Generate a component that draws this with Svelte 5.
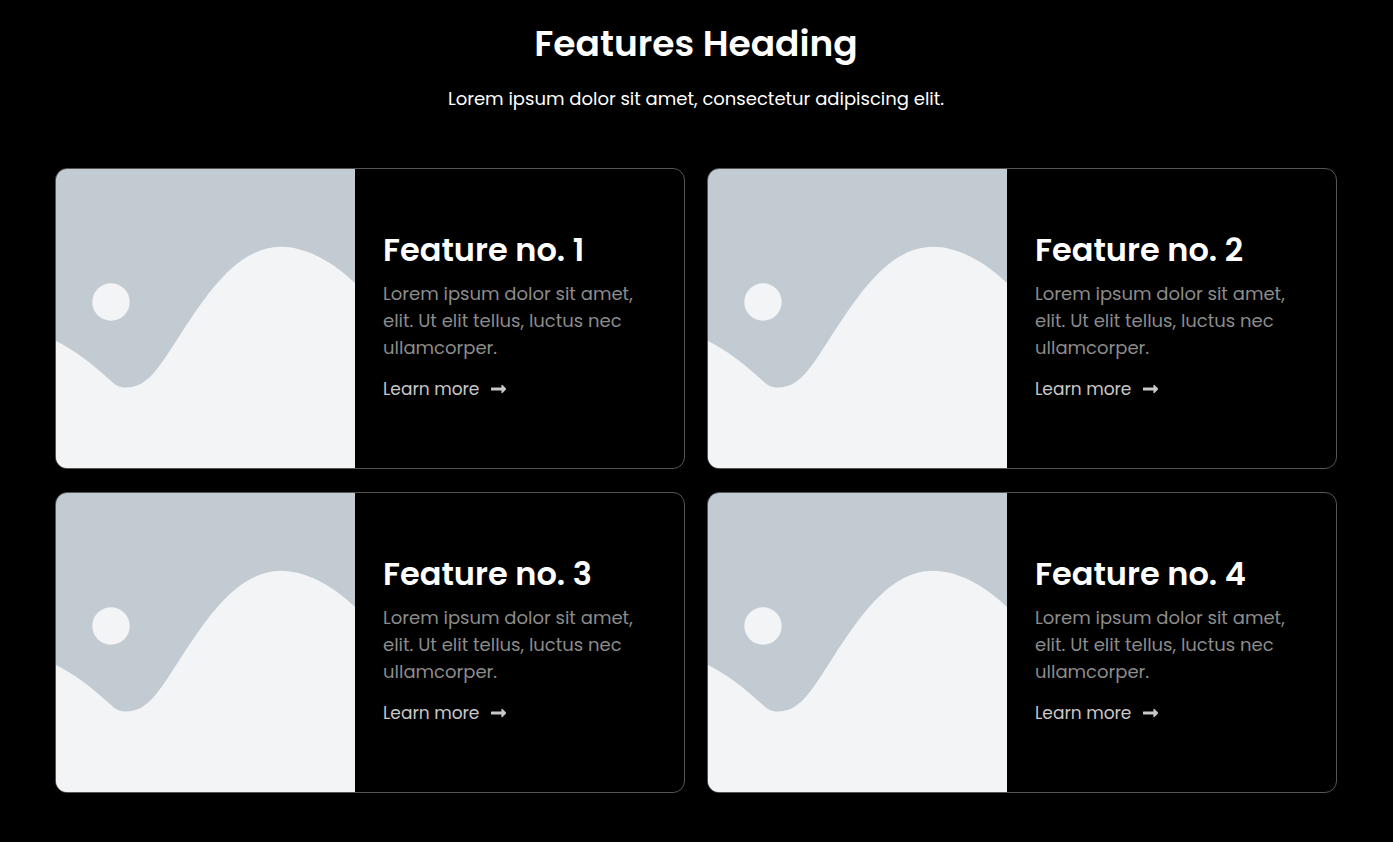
<script>
    const text = 'Lorem ipsum dolor sit amet, elit. Ut elit tellus, luctus nec ullamcorper.';

    let features = [
        { id: 1, title: 'Feature no. 1', text },
        { id: 2, title: 'Feature no. 2', text },
        { id: 3, title: 'Feature no. 3', text },
        { id: 4, title: 'Feature no. 4', text }
    ];
</script>

<section class="features">
    <header>
        <h1>Features Heading</h1>
        <p>Lorem ipsum dolor sit amet, consectetur adipiscing elit.</p>
    </header>

    <div class="grid">
        {#each features as feature (feature.id)}
            <article class="card">
                <svg class="image" viewBox="0 0 299 299" preserveAspectRatio="xMidYMid slice" aria-hidden="true">
                    <rect width="299" height="299" fill="#c3cbd2" />
                    <circle cx="55" cy="133" r="18.7" fill="#f2f4f6" />
                    <path
                        fill="#f2f4f6"
                        d="M0 172C18 181 34 193 55 212C60 217 65 218.5 70 218.5C82 218.5 91 212.5 101 200C109 190 118 175 127.5 160.5C149 129 180 77.8 225 77.8C249 77.8 276 92 299 114V299H0Z"
                    />
                </svg>
                <div class="content">
                    <h2>{feature.title}</h2>
                    <p>{feature.text}</p>
                    <a href="#feature-{feature.id}">
                        Learn more
                        <svg class="arrow" viewBox="0 0 16 10" aria-hidden="true">
                            <path d="M.5 3.4H10.4V1.6Q10.5 .4 11.5 1.1L14.8 4.3Q15.4 5 14.8 5.7L11.5 8.9Q10.5 9.6 10.4 8.4V6.6H.5Q0 6.6 0 6.1V3.9Q0 3.4 .5 3.4Z" fill="currentColor" />
                        </svg>
                    </a>
                </div>
            </article>
        {/each}
    </div>
</section>

<style>
    :global(body) {
        margin: 0;
        background-color: #000;
    }

    .features {
        padding: 16px 56px 48px 55px;
        color: #fff;
        font-family: Poppins, Inter, sans-serif;
    }

    header {
        margin-bottom: 56px;
        text-align: center;
    }

    h1 {
        margin: 0 0 14px;
        font-size: 36px;
        line-height: 56px;
        font-weight: 600;
    }

    header p {
        margin: 0;
        font-size: 18px;
        line-height: 26px;
    }

    .grid {
        display: grid;
        grid-template-columns: 1fr 1fr;
        gap: 23px 22px;
    }

    .card {
        display: flex;
        overflow: hidden;
        border: 1px solid #555;
        border-radius: 12px;
    }

    .image {
        flex: none;
        width: 299px;
        height: 299px;
    }

    .content {
        display: flex;
        flex-direction: column;
        justify-content: center;
        align-items: flex-start;
        padding: 0 28px 6px;
    }

    h2 {
        margin: 0 0 10px;
        font-size: 32px;
        line-height: 40px;
        font-weight: 600;
    }

    .content p {
        margin: 0 0 16px;
        color: #8c8c8c;
        font-size: 18px;
        line-height: 27px;
    }

    a {
        display: flex;
        align-items: center;
        gap: 12px;
        color: #c8c8c8;
        font-size: 17px;
        line-height: 24px;
        text-decoration: none;
    }

    .arrow {
        width: 16px;
        height: 10px;
    }
</style>
